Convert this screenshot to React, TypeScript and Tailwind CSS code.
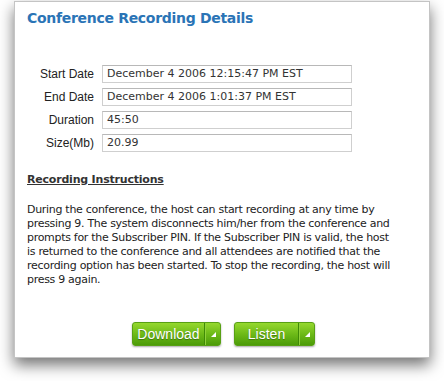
import React from "react";

const rows = [
  { label: "Start Date", value: "December 4 2006 12:15:47 PM EST" },
  { label: "End Date", value: "December 4 2006 1:01:37 PM EST" },
  { label: "Duration", value: "45:50" },
  { label: "Size(Mb)", value: "20.99" },
];

function SplitButton({ label, width }: { label: string; width: string }) {
  return (
    <div
      className={`flex h-[24px] ${width} rounded-[3px] overflow-hidden bg-gradient-to-b from-[#95d82e] via-[#6dba18] to-[#4c9c08] shadow-[0_1px_2px_rgba(0,0,0,0.35)] border border-[#58a014]`}
    >
      <div className="flex-1 flex items-center justify-center text-white text-[14px] [text-shadow:0_1px_1px_rgba(0,0,0,0.35)]">
        {label}
      </div>
      <div className="w-px bg-[#3f8a06]" />
      <div className="w-px bg-[#8fd13a]" />
      <div className="w-[14px] flex items-end justify-center pb-[8px]">
        <svg width="5" height="5" viewBox="0 0 5 5">
          <polygon points="5,0 5,5 0,5" fill="#fff" />
        </svg>
      </div>
    </div>
  );
}

export default function App() {
  return (
    <div
      className="w-[444px] h-[381px] bg-white overflow-hidden pt-px"
      style={{ fontFamily: '"DejaVu Sans", Verdana, sans-serif' }}
    >
      <div className="ml-[14px] w-[416px] h-[357px] bg-white border border-[#c4c4c4] shadow-[0_7px_14px_rgba(0,0,0,0.55)] px-[12px] pt-[6px]">
        <h1 className="text-[14px] tracking-[-0.3px] font-bold text-[#2a74b6] leading-[20px]">
          Conference Recording Details
        </h1>

        <div className="mt-[37px] flex flex-col gap-[5px]">
          {rows.map((r) => (
            <div key={r.label} className="flex items-center">
              <div
                className="w-[67px] text-right text-[12px] text-[#222]"
                style={{ fontFamily: '"Liberation Sans", Arial, sans-serif' }}
              >
                {r.label}
              </div>
              <div className="ml-[8px] w-[250px] h-[18px] border border-[#cfcfcf] border-t-[#b8b8b8] bg-white flex items-center pl-[4px] text-[11px] text-[#333]">
                {r.value}
              </div>
            </div>
          ))}
        </div>

        <h2 className="mt-[20px] text-[11px] tracking-[-0.2px] font-bold text-[#333] underline leading-[16px]">
          Recording Instructions
        </h2>
        <p className="mt-[15px] w-[366px] text-[11px] tracking-[-0.3px] leading-[14px] text-[#222]">
          During the conference, the host can start recording at any time by
          pressing 9. The system disconnects him/her from the conference and
          prompts for the Subscriber PIN. If the Subscriber PIN is valid, the
          host is returned to the conference and all attendees are notified that
          the recording option has been started. To stop the recording, the host
          will press 9 again.
        </p>

        <div
          className="mt-[35px] flex justify-center gap-[13px] pl-[3px]"
          style={{ fontFamily: '"Liberation Sans", Arial, sans-serif' }}
        >
          <SplitButton label="Download" width="w-[89px]" />
          <SplitButton label="Listen" width="w-[81px]" />
        </div>
      </div>
    </div>
  );
}
